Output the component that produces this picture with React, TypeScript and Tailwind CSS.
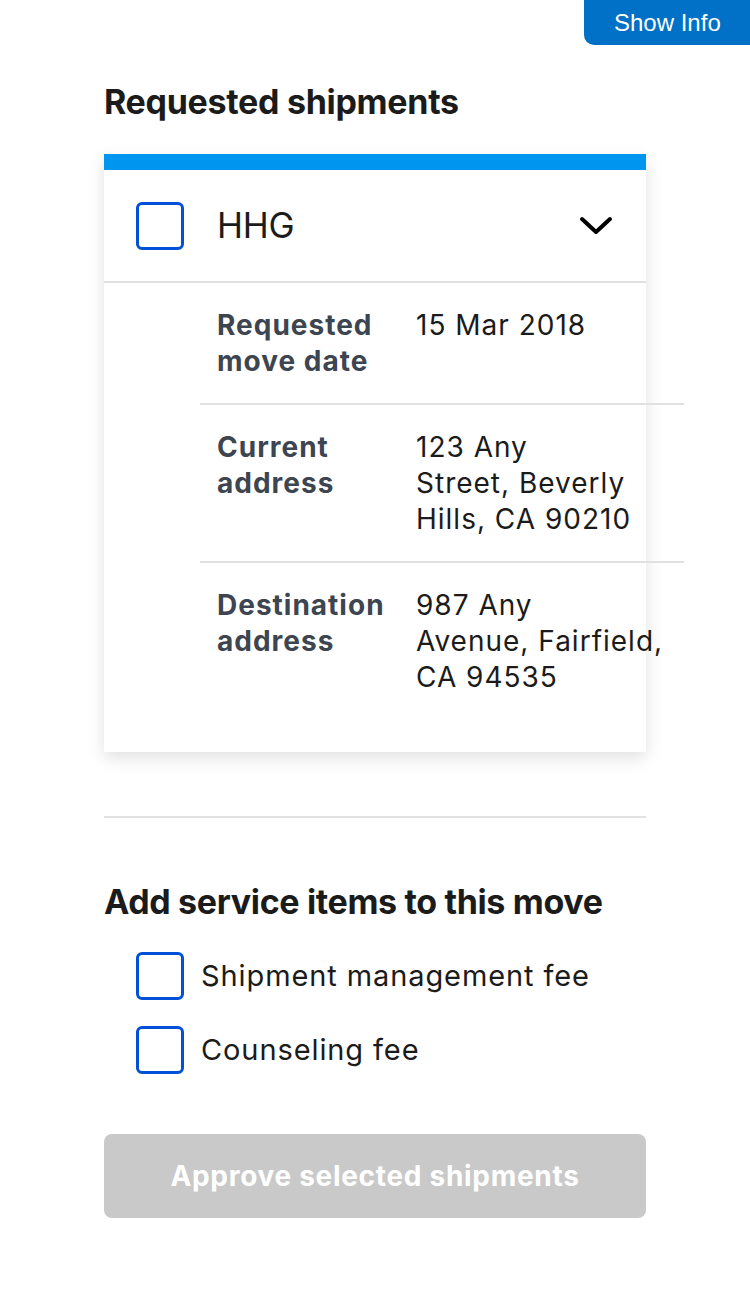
import React from "react";

const details = [
  { label: "Requested move date", value: ["15 Mar 2018"] },
  { label: "Current address", value: ["123 Any", "Street, Beverly", "Hills, CA 90210"] },
  { label: "Destination address", value: ["987 Any", "Avenue, Fairfield,", "CA 94535"] },
];

const serviceItems = ["Shipment management fee", "Counseling fee"];

function Checkbox() {
  return (
    <span className="block w-[48px] h-[48px] shrink-0 rounded-[6px] border-[3px] border-[#0050d8] bg-white"></span>
  );
}

export default function App() {
  return (
    <div className="relative min-h-[1306px] bg-white text-[#1b1b1b] font-['Inter','Noto_Sans',sans-serif]">
      <button className="absolute top-0 right-0 h-[45px] w-[166px] pl-[30px] text-left rounded-bl-[10px] bg-[#0071c6] text-white text-[24px] font-['Liberation_Sans',Arial,sans-serif]">
        Show Info
      </button>

      <div className="px-[104px] pt-[82px]">
        <h2 className="text-[34px] leading-[40px] font-bold tracking-[-0.3px]">Requested shipments</h2>

        <div className="mt-[32px] bg-white border-t-[16px] border-[#0096f0] shadow-[0_6px_16px_rgba(0,0,0,0.12)] pb-[33px]">
          <div className="h-[111px] flex items-center pl-[32px] pr-[33px] border-b-2 border-[#dfe1e2] box-content">
            <Checkbox />
            <span className="ml-[33px] text-[35px] leading-none tracking-[-0.3px]">HHG</span>
            <svg className="ml-auto" width="34" height="19" viewBox="0 0 34 19" fill="none">
              <path d="M3 3 L17 16 L31 3" stroke="#000" strokeWidth="4" strokeLinecap="round" strokeLinejoin="round" />
            </svg>
          </div>

          <dl className="ml-[96px] w-[484px]">
            {details.map((d, i) => (
              <div
                key={d.label}
                className={
                  "flex py-6 text-[28px] leading-[36px] " +
                  (i < details.length - 1 ? "border-b-2 border-[#dfe1e2]" : "")
                }
              >
                <dt className="w-[216px] pl-[17px] pr-4 shrink-0 font-bold text-[#3d4551] tracking-[1px]">
                  {d.label}
                </dt>
                <dd className="w-[268px] tracking-[1px]">
                  {d.value.map((line) => (
                    <span key={line} className="block whitespace-nowrap">
                      {line}
                    </span>
                  ))}
                </dd>
              </div>
            ))}
          </dl>
        </div>

        <hr className="mt-[64px] border-0 border-t-2 border-[#dfe1e2]" />

        <h2 className="mt-[64px] text-[34px] leading-[40px] font-bold tracking-[-0.35px]">
          Add service items to this move
        </h2>

        <div className="mt-[30px] flex flex-col gap-[26px] pl-[32px]">
          {serviceItems.map((item) => (
            <label key={item} className="flex items-center gap-[17px] text-[29px] tracking-[0.9px]">
              <Checkbox />
              <span>{item}</span>
            </label>
          ))}
        </div>

        <button
          disabled
          className="mt-[60px] w-full h-[84px] rounded-lg bg-[#c9c9c9] text-white text-[28px] font-bold tracking-[0.7px]"
        >
          Approve selected shipments
        </button>
      </div>
    </div>
  );
}
